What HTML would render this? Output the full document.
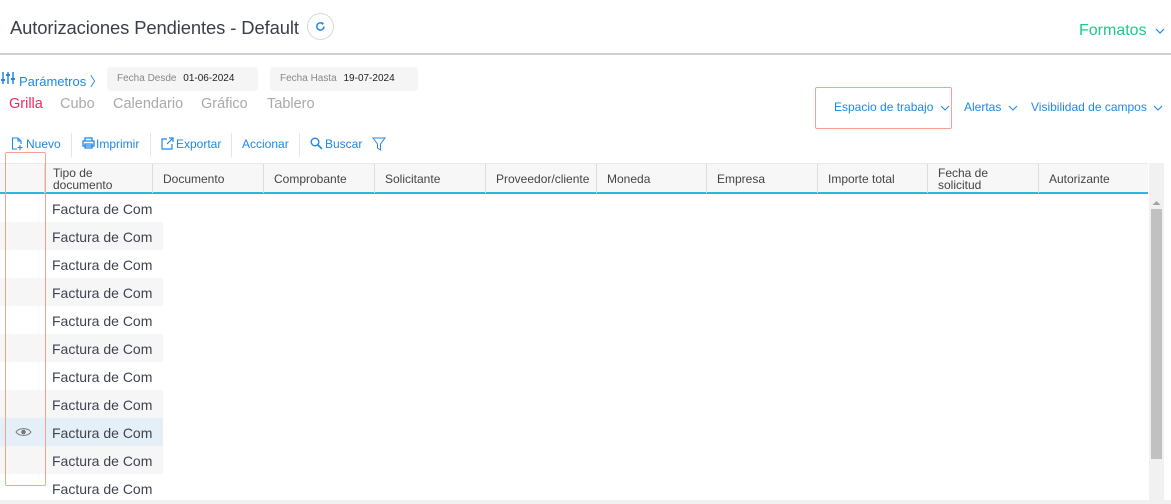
<!DOCTYPE html>
<html><head><meta charset="utf-8"><style>
*{margin:0;padding:0;box-sizing:border-box}
body{width:1171px;height:504px;overflow:hidden;background:#fff;font-family:"Liberation Sans",sans-serif;position:relative;color:#333}
.a{position:absolute;white-space:nowrap}
.blue{color:#1e88e5}
.title{left:10px;top:17px;font-size:18.4px;color:#3b3f4a;letter-spacing:-0.1px}
.hdr{position:absolute;top:163px;left:0;width:1148px;height:31px;background:#f7f7f7;border-bottom:2px solid #2bb8e0;border-top:1px solid #eaeaea}
.hc{position:absolute;top:0;height:29px;border-left:1px solid #ddd;font-size:12px;color:#444;padding-left:10px;display:flex;align-items:center;line-height:12px}
.row{position:absolute;left:0;height:28px;width:1148px}
.row .g{position:absolute;left:0;top:0;width:163px;height:28px}
.row .t{position:absolute;left:52px;top:7px;font-size:14px;color:#3f4350;width:101px;overflow:hidden;white-space:nowrap}
.sep{position:absolute;top:133px;width:1px;height:24px;background:#e5e5e5}
</style></head><body>
<div class="a title">Autorizaciones Pendientes - Default</div>
<div class="a" style="left:307px;top:13px;width:27px;height:27px;border:1px solid #d8d8d8;border-radius:50%;"></div>
<svg class="a" style="left:314px;top:20px" width="13" height="13" viewBox="0 0 13 13"><path d="M10 6.5A3.6 3.6 0 1 1 8.7 3.7" fill="none" stroke="#1e88e5" stroke-width="1.5"/><path d="M7.5 1.8L10 3.3 8 5.5Z" fill="#1e88e5"/></svg>
<div class="a" style="left:1079px;top:22px;font-size:16px;color:#1fc98a">Formatos</div>
<svg class="a" style="left:1155px;top:28px" width="10" height="7"><path d="M1 1l4 4 4-4" fill="none" stroke="#1e88e5" stroke-width="1.2"/></svg>
<div class="a" style="left:0;top:53px;width:1171px;height:2px;background:#d0d0d4"></div>

<svg class="a" style="left:1px;top:71px" width="14" height="14" viewBox="0 0 14 14"><g stroke="#1e88e5" stroke-width="1.5"><path d="M2 1v12M7 1v12M12 1v12"/></g><g fill="#1e88e5"><rect x="0" y="8" width="4" height="2"/><rect x="5" y="3" width="4" height="2"/><rect x="10" y="7" width="4" height="2"/></g></svg>
<div class="a blue" style="left:19px;top:71px;font-size:13px">Parámetros 〉</div>
<div class="a" style="left:107px;top:67px;width:151px;height:24px;background:#f5f5f5;border-radius:3px;font-size:10px;color:#888;padding:6px 0 0 10px">Fecha Desde <span style="color:#222;font-size:10px;margin-left:4px">01-06-2024</span></div>
<div class="a" style="left:270px;top:67px;width:148px;height:24px;background:#f5f5f5;border-radius:3px;font-size:10px;color:#888;padding:6px 0 0 10px">Fecha Hasta <span style="color:#222;font-size:10px;margin-left:4px">19-07-2024</span></div>
<div class="a" style="left:9px;top:96px;font-size:14.5px;color:#ee2a62">Grilla</div>
<div class="a" style="left:60px;top:96px;font-size:14.5px;color:#aaa">Cubo</div>
<div class="a" style="left:113px;top:96px;font-size:14.5px;color:#aaa">Calendario</div>
<div class="a" style="left:201px;top:96px;font-size:14.5px;color:#aaa">Gráfico</div>
<div class="a" style="left:267px;top:96px;font-size:14.5px;color:#aaa">Tablero</div>

<div class="a" style="left:815px;top:87px;width:137px;height:42px;border:1.5px solid #f5a291;border-radius:2px"></div>
<div class="a blue" style="left:834px;top:100px;font-size:12px">Espacio de trabajo</div>
<div class="a blue" style="left:964px;top:100px;font-size:12px">Alertas</div>
<div class="a blue" style="left:1031px;top:100px;font-size:12px">Visibilidad de campos</div>
<svg class="a" style="left:940px;top:105px" width="10" height="7"><path d="M1 1l4 4 4-4" fill="none" stroke="#1e88e5" stroke-width="1"/></svg>
<svg class="a" style="left:1008px;top:105px" width="10" height="7"><path d="M1 1l4 4 4-4" fill="none" stroke="#1e88e5" stroke-width="1"/></svg>
<svg class="a" style="left:1153px;top:105px" width="10" height="7"><path d="M1 1l4 4 4-4" fill="none" stroke="#1e88e5" stroke-width="1"/></svg>

<svg class="a" style="left:11px;top:137px" width="13" height="13" viewBox="0 0 13 13"><path d="M7 1H1.5v11H6M7 1l3 3v3M7 1v3h3M9 8v5M6.5 10.5h5" fill="none" stroke="#1e88e5" stroke-width="1.1"/></svg>
<div class="a blue" style="left:26px;top:137px;font-size:12px">Nuevo</div>
<div class="sep" style="left:71px"></div>
<svg class="a" style="left:82px;top:137px" width="13" height="12" viewBox="0 0 13 12"><path d="M3 4V1h7v3M1 4h11v5H1zM3 7h7v4H3z" fill="none" stroke="#1e88e5" stroke-width="1.3"/></svg>
<div class="a blue" style="left:96px;top:137px;font-size:12px">Imprimir</div>
<div class="sep" style="left:150px"></div>
<svg class="a" style="left:161px;top:137px" width="13" height="13" viewBox="0 0 13 13"><path d="M6 2H1v10h10V7M8 1h4v4M12 1L6 7" fill="none" stroke="#1e88e5" stroke-width="1.2"/></svg>
<div class="a blue" style="left:176px;top:137px;font-size:12px">Exportar</div>
<div class="sep" style="left:231px"></div>
<div class="a blue" style="left:242px;top:137px;font-size:12px">Accionar</div>
<div class="sep" style="left:299px"></div>
<svg class="a" style="left:310px;top:137px" width="13" height="13" viewBox="0 0 13 13"><circle cx="5" cy="5" r="3.8" fill="none" stroke="#1e88e5" stroke-width="1.4"/><path d="M8 8l4 4" stroke="#1e88e5" stroke-width="1.6"/></svg>
<div class="a blue" style="left:325px;top:137px;font-size:12px">Buscar</div>
<svg class="a" style="left:372px;top:137px" width="14" height="14" viewBox="0 0 14 14"><path d="M1 1h12L8.5 7v6L5.5 11V7z" fill="none" stroke="#1e88e5" stroke-width="1"/></svg>

<div class="hdr">
<div class="hc" style="left:0;width:44px;border-left:none"></div>
<div class="hc" style="left:44px;width:108px;padding-left:8px">Tipo de<br>documento</div>
<div class="hc" style="left:152px;width:111px">Documento</div>
<div class="hc" style="left:263px;width:111px">Comprobante</div>
<div class="hc" style="left:374px;width:111px">Solicitante</div>
<div class="hc" style="left:485px;width:111px">Proveedor/cliente</div>
<div class="hc" style="left:596px;width:110px">Moneda</div>
<div class="hc" style="left:706px;width:111px">Empresa</div>
<div class="hc" style="left:817px;width:110px">Importe total</div>
<div class="hc" style="left:927px;width:111px">Fecha de<br>solicitud</div>
<div class="hc" style="left:1038px;width:110px">Autorizante</div>
</div>
<div class="a" style="left:1149px;top:163px;width:15px;height:341px;background:#f1f1f1"></div>
<div class="a" style="left:1151px;top:209px;width:11px;height:250px;background:#c1c1c1"></div>
<svg class="a" style="left:1152px;top:200px" width="9" height="6"><path d="M0.5 5L4.5 1 8.5 5z" fill="#a3a3a3"/></svg>

<div class="row" style="top:194px"><div class="t">Factura de Comprobante</div></div>
<div class="row" style="top:222px"><div class="g" style="background:#f6f6f6"></div><div class="t">Factura de Comprobante</div></div>
<div class="row" style="top:250px"><div class="t">Factura de Comprobante</div></div>
<div class="row" style="top:278px"><div class="g" style="background:#f6f6f6"></div><div class="t">Factura de Comprobante</div></div>
<div class="row" style="top:306px"><div class="t">Factura de Comprobante</div></div>
<div class="row" style="top:334px"><div class="g" style="background:#f6f6f6"></div><div class="t">Factura de Comprobante</div></div>
<div class="row" style="top:362px"><div class="t">Factura de Comprobante</div></div>
<div class="row" style="top:390px"><div class="g" style="background:#f6f6f6"></div><div class="t">Factura de Comprobante</div></div>
<div class="row" style="top:418px"><div class="g" style="background:#e4eff7"></div><div class="t">Factura de Comprobante</div>
<svg class="a" style="left:15px;top:9px" width="17" height="10" viewBox="0 0 17 10"><path d="M1 5C4 0.5 13 0.5 16 5 13 9.5 4 9.5 1 5z" fill="none" stroke="#777" stroke-width="1"/><circle cx="8.5" cy="5" r="2.3" fill="#777"/></svg></div>
<div class="row" style="top:446px"><div class="g" style="background:#f6f6f6"></div><div class="t">Factura de Comprobante</div></div>
<div class="row" style="top:474px"><div class="t">Factura de Comprobante</div></div>
<div class="a" style="left:0;top:500px;width:1171px;height:4px;background:#f1f1f1"></div>
<div class="a" style="left:5px;top:152px;width:41px;height:334px;border:1.5px solid #f5a291;border-radius:2px"></div>
</body></html>
